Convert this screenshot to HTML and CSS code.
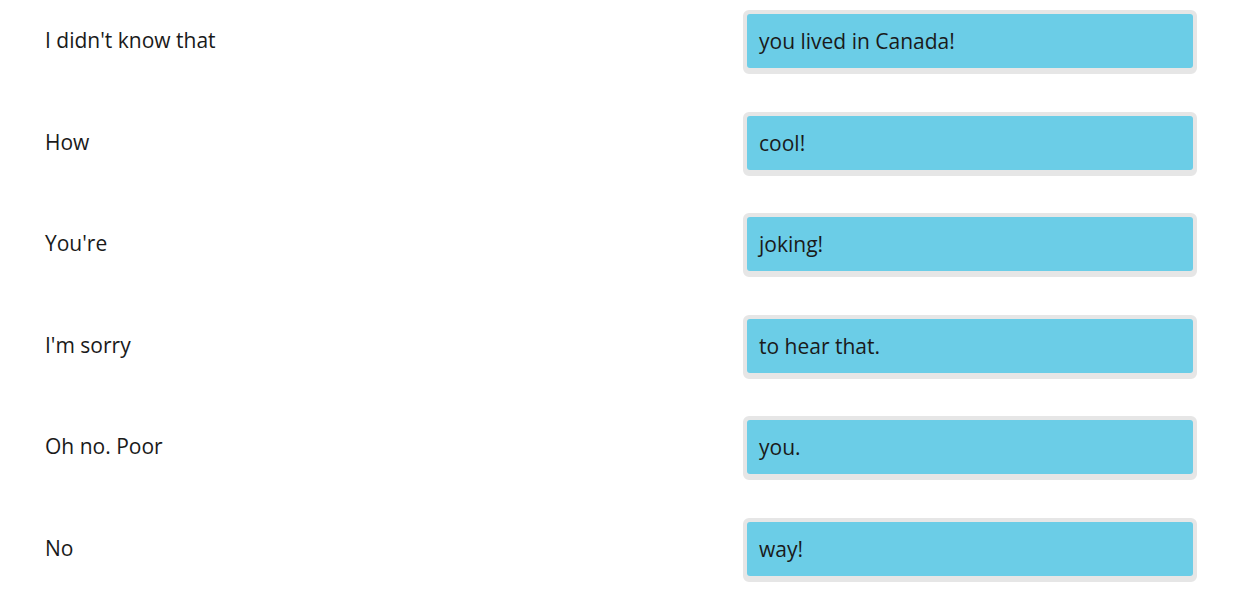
FILE: index.html
```html
<!DOCTYPE html>
<html lang="en">
<head>
<meta charset="utf-8">
<title>Phrases</title>
<link rel="stylesheet" href="styles.css">
</head>
<body>
<div class="list">
  <div class="row"><div class="start">I didn't know that</div><div class="slot"><div class="chip">you lived in Canada!</div></div></div>
  <div class="row"><div class="start">How</div><div class="slot"><div class="chip">cool!</div></div></div>
  <div class="row"><div class="start">You're</div><div class="slot"><div class="chip">joking!</div></div></div>
  <div class="row"><div class="start">I'm sorry</div><div class="slot"><div class="chip">to hear that.</div></div></div>
  <div class="row"><div class="start">Oh no. Poor</div><div class="slot"><div class="chip">you.</div></div></div>
  <div class="row"><div class="start">No</div><div class="slot"><div class="chip">way!</div></div></div>
</div>
</body>
</html>
```

FILE: styles.css
```css
html, body {
  margin: 0;
  padding: 0;
  background: #ffffff;
}
body {
  font-family: "Open Sans", "Liberation Sans", sans-serif;
  font-size: 21px;
  color: #1a1a1a;
}
.list {
  display: flex;
  flex-direction: column;
  padding: 10px 43px 0 45px;
}
.row {
  display: grid;
  grid-template-columns: 1fr 454px;
  align-items: center;
  height: 64px;
  margin-bottom: 37.6px;
}
.start {
  line-height: 24px;
  margin-top: -4px;
}
.slot {
  box-sizing: border-box;
  height: 64px;
  border: 4px solid #e6e6e6;
  border-bottom-width: 6px;
  border-radius: 6px;
  background: #e6e6e6;
}
.chip {
  box-sizing: border-box;
  height: 54px;
  background: #6bcde7;
  border-radius: 3px;
  padding: 0 12px;
  display: flex;
  align-items: center;
  line-height: 24px;
}
```
